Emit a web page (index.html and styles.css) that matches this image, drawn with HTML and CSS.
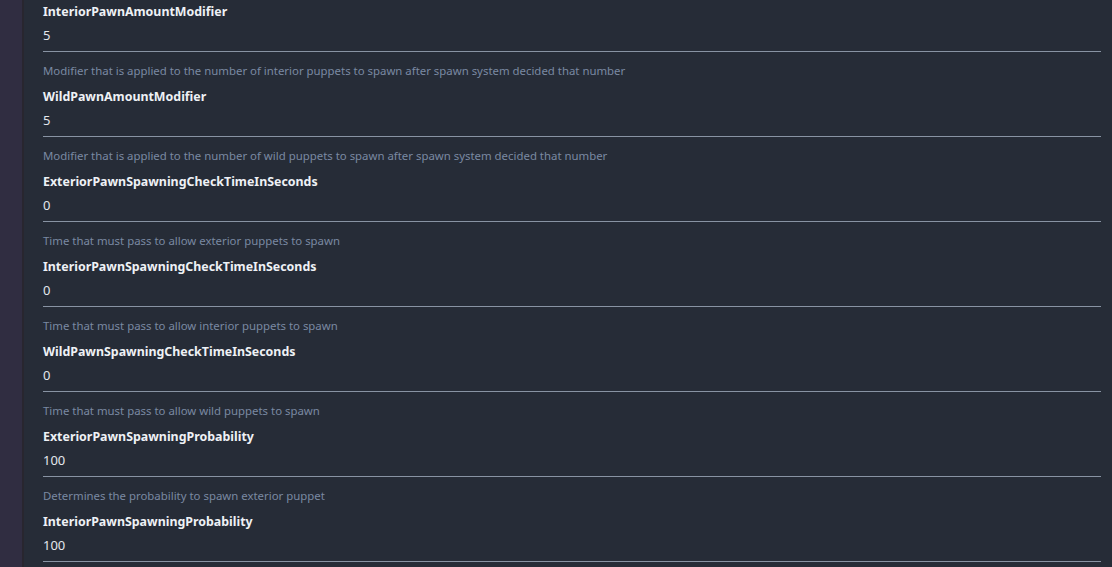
FILE: index.html
```html
<!DOCTYPE html>
<html lang="en">
<head>
    <meta charset="UTF-8">
    <title>Spawn Settings</title>
    <link rel="stylesheet" href="styles.css">
</head>
<body>
    <div class="layout">
        <div class="side-strip"></div>
        <div class="settings">
            <div class="setting first">
                <div class="setting-name">InteriorPawnAmountModifier</div>
                <div class="setting-value">5</div>
            </div>
            <div class="setting">
                <div class="setting-desc">Modifier that is applied to the number of interior puppets to spawn after spawn system decided that number</div>
                <div class="setting-name">WildPawnAmountModifier</div>
                <div class="setting-value">5</div>
            </div>
            <div class="setting">
                <div class="setting-desc">Modifier that is applied to the number of wild puppets to spawn after spawn system decided that number</div>
                <div class="setting-name">ExteriorPawnSpawningCheckTimeInSeconds</div>
                <div class="setting-value">0</div>
            </div>
            <div class="setting">
                <div class="setting-desc">Time that must pass to allow exterior puppets to spawn</div>
                <div class="setting-name">InteriorPawnSpawningCheckTimeInSeconds</div>
                <div class="setting-value">0</div>
            </div>
            <div class="setting">
                <div class="setting-desc">Time that must pass to allow interior puppets to spawn</div>
                <div class="setting-name">WildPawnSpawningCheckTimeInSeconds</div>
                <div class="setting-value">0</div>
            </div>
            <div class="setting">
                <div class="setting-desc">Time that must pass to allow wild puppets to spawn</div>
                <div class="setting-name">ExteriorPawnSpawningProbability</div>
                <div class="setting-value">100</div>
            </div>
            <div class="setting">
                <div class="setting-desc">Determines the probability to spawn exterior puppet</div>
                <div class="setting-name">InteriorPawnSpawningProbability</div>
                <div class="setting-value">100</div>
            </div>
        </div>
    </div>
</body>
</html>
```

FILE: styles.css
```css
body {
    margin: 0;
    height: 567px;
    overflow: hidden;
    background-color: #262c37;
    font-family: "Noto Sans", "Open Sans", sans-serif;
}

.layout {
    display: flex;
    height: 100%;
}

.side-strip {
    width: 22px;
    flex-shrink: 0;
    background-color: #302d41;
    border-right: 2px solid #28262f;
}

.settings {
    flex: 1;
    padding: 0 11px 0 19px;
}

.setting {
    padding: 11px 0 6px;
    border-bottom: 1px solid #8893a3;
}

.setting.first {
    padding-top: 2px;
}

.setting-desc {
    font-size: 11.4px;
    line-height: 16px;
    color: #7a89a2;
    margin-bottom: 8px;
}

.setting-name {
    font-size: 12.4px;
    line-height: 20px;
    font-weight: bold;
    color: #eef1f5;
}

.setting-value {
    font-size: 13px;
    line-height: 20px;
    margin-top: 3px;
    color: #e3e7ec;
}
```
